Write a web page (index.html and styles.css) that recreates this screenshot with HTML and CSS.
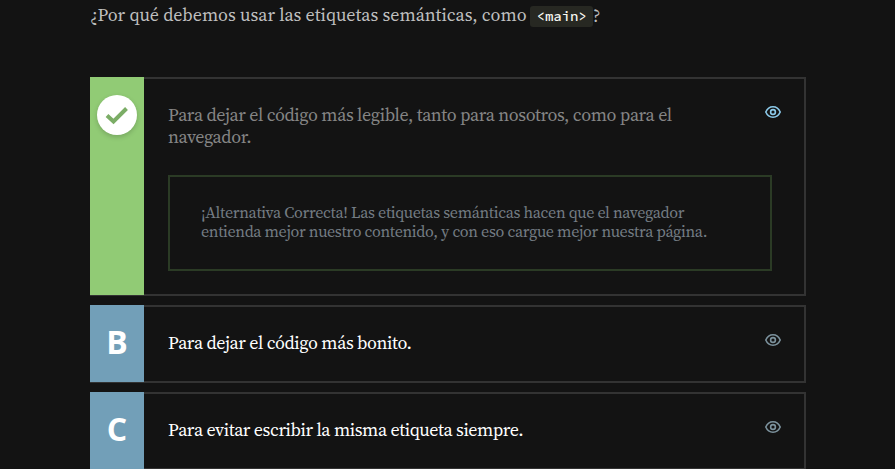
FILE: index.html
```html
<!DOCTYPE html>
<html lang="es">
<head>
<meta charset="utf-8">
<title>Etiquetas semánticas</title>
<link rel="stylesheet" href="styles.css">
</head>
<body>
<svg class="defs" aria-hidden="true">
  <symbol id="eye" viewBox="0 0 16 12">
    <path d="M.8 6C2.2 2.7 4.8.8 8 .8S13.8 2.7 15.2 6C13.8 9.3 11.2 11.2 8 11.2S2.2 9.3.8 6Z"/>
    <circle cx="8" cy="6" r="2.4"/>
  </symbol>
</svg>
<main class="exercise">
  <p class="question"><span class="question-text">¿Por qué debemos usar las etiquetas semánticas, como</span> <code>&lt;main&gt;</code>?</p>
  <ul class="options">
    <li class="option option-correct">
      <div class="letter"><span class="check"><svg viewBox="0 0 24 20"><path d="M2 10.5 8.5 16.5 21.5 3.5"/></svg></span></div>
      <div class="content">
        <p class="answer">Para dejar el código más legible, tanto para nosotros, como para el<br>navegador.</p>
        <div class="feedback">¡Alternativa Correcta! Las etiquetas semánticas hacen que el navegador<br>entienda mejor nuestro contenido, y con eso cargue mejor nuestra página.</div>
      </div>
      <svg class="eye"><use href="#eye"/></svg>
    </li>
    <li class="option">
      <div class="letter">B</div>
      <div class="content"><p class="answer">Para dejar el código más bonito.</p></div>
      <svg class="eye"><use href="#eye"/></svg>
    </li>
    <li class="option">
      <div class="letter">C</div>
      <div class="content"><p class="answer">Para evitar escribir la misma etiqueta siempre.</p></div>
      <svg class="eye"><use href="#eye"/></svg>
    </li>
  </ul>
</main>
</body>
</html>
```
FILE: styles.css
```css
* { box-sizing: border-box; }
html { height: 100%; overflow: hidden; }
body {
  margin: 0;
  height: 100%;
  overflow: hidden;
  background: #131313;
  font-family: "Source Serif Pro", "Source Serif 4", "Liberation Serif", serif;
}
.defs { position: absolute; width: 0; height: 0; }
.exercise { width: 716px; margin-left: 90px; }
.question {
  display: flex;
  align-items: center;
  height: 32px;
  margin: 0 0 45px;
  color: #bfbfbf;
  font-size: 18px;
  line-height: 32px;
  white-space: nowrap;
}
.question-text { width: 440px; margin-top: -2px; }
code {
  height: 21px;
  width: 63px;
  padding-left: 6.5px;
  border-radius: 3px;
  background: #272822;
  color: #f8f8f2;
  font: 500 14px/21px "Source Code Pro", "Liberation Mono", monospace;
}
.options {
  display: flex;
  flex-direction: column;
  gap: 9px;
  margin: 0;
  padding: 0;
  list-style: none;
}
.option {
  display: flex;
  height: 78px;
  border: solid #333;
  border-width: 2px 2px 2px 0;
  color: #fff;
}
.option-correct { height: 219px; color: #858585; }
.letter {
  flex: 0 0 54px;
  margin: -2px 0 -1px;
  background: #729fb8;
  color: #fff;
  font: 700 32px/73px "Open Sans", sans-serif;
  text-align: center;
}
.option-correct .letter { background: #91cb75; padding: 18px 7px; }
.check {
  display: grid;
  place-items: center;
  width: 40px;
  height: 40px;
  border-radius: 50%;
  background: #fff;
  box-shadow: 0 2px 5px rgba(0, 0, 0, .18);
}
.check svg { width: 24px; height: 20px; }
.check path { fill: none; stroke: #7bad66; stroke-width: 4; }
.content { width: 628px; padding: 25px 0 0 24px; }
.answer {
  margin: 0;
  font-size: 18px;
  line-height: 22px;
  letter-spacing: -.4px;
  white-space: nowrap;
}
.feedback {
  width: 604px;
  height: 96px;
  margin-top: 27px;
  padding: 26px 31px;
  border: 2px solid #2b3b25;
  color: #737c83;
  font-size: 16px;
  line-height: 19px;
  letter-spacing: -.32px;
  white-space: nowrap;
}
.eye {
  flex: none;
  width: 16px;
  height: 12px;
  margin: 27px 0 0 -7px;
  fill: none;
  stroke: #7c929d;
  stroke-width: 1.6;
}
.option-correct .eye { stroke: #8ccaea; }
```
